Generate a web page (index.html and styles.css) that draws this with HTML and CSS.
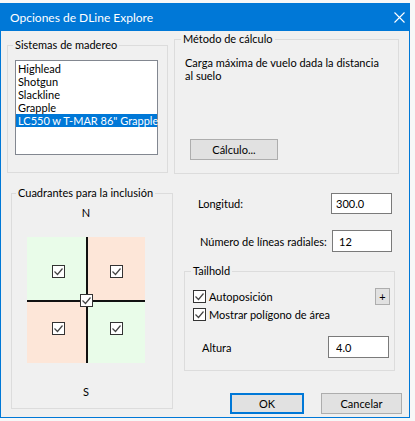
FILE: index.html
```html
<!DOCTYPE html>
<html lang="es">
<head>
    <meta charset="UTF-8">
    <title>Opciones de DLine Explore</title>
    <link rel="stylesheet" href="styles.css">
</head>
<body>
    <div class="window">
        <div class="titlebar">
            <span class="title">Opciones de DLine Explore</span>
            <svg class="close" width="11" height="11" viewBox="0 0 11 11">
                <path d="M0.5 0.5L10.5 10.5M10.5 0.5L0.5 10.5" stroke="#fff" stroke-width="1.1" fill="none"/>
            </svg>
        </div>

        <div class="client">
            <div class="col-left">
                <fieldset class="group systems">
                    <legend>Sistemas de madereo</legend>
                    <ul class="listbox">
                        <li>Highlead</li>
                        <li>Shotgun</li>
                        <li>Slackline</li>
                        <li>Grapple</li>
                        <li class="selected">LC550 w T-MAR 86" Grapple</li>
                    </ul>
                </fieldset>

                <fieldset class="group quadrants">
                    <legend>Cuadrantes para la inclusión</legend>
                    <div class="compass">N</div>
                    <div class="quad-grid">
                        <div class="quad green top left"><svg class="chk" width="13" height="13" viewBox="0 0 13 13"><rect x="0.5" y="0.5" width="12" height="12" fill="#fff" stroke="#333"/><path d="M2.5 6.5L5.5 9.5L10.5 3.5" fill="none" stroke="#444" stroke-width="1.2"/></svg></div>
                        <div class="line"></div>
                        <div class="quad peach top right"><svg class="chk" width="13" height="13" viewBox="0 0 13 13"><rect x="0.5" y="0.5" width="12" height="12" fill="#fff" stroke="#333"/><path d="M2.5 6.5L5.5 9.5L10.5 3.5" fill="none" stroke="#444" stroke-width="1.2"/></svg></div>
                        <div class="line"></div>
                        <div class="line"></div>
                        <div class="line"></div>
                        <div class="quad peach bottom left"><svg class="chk" width="13" height="13" viewBox="0 0 13 13"><rect x="0.5" y="0.5" width="12" height="12" fill="#fff" stroke="#333"/><path d="M2.5 6.5L5.5 9.5L10.5 3.5" fill="none" stroke="#444" stroke-width="1.2"/></svg></div>
                        <div class="line"></div>
                        <div class="quad green bottom right"><svg class="chk" width="13" height="13" viewBox="0 0 13 13"><rect x="0.5" y="0.5" width="12" height="12" fill="#fff" stroke="#333"/><path d="M2.5 6.5L5.5 9.5L10.5 3.5" fill="none" stroke="#444" stroke-width="1.2"/></svg></div>
                        <svg class="chk center-chk" width="13" height="13" viewBox="0 0 13 13"><rect x="0.5" y="0.5" width="12" height="12" fill="#fff" stroke="#333"/><path d="M2.5 6.5L5.5 9.5L10.5 3.5" fill="none" stroke="#444" stroke-width="1.2"/></svg>
                    </div>
                    <div class="compass south">S</div>
                </fieldset>
            </div>

            <div class="col-right">
                <fieldset class="group method">
                    <legend>Método de cálculo</legend>
                    <p class="method-text">Carga máxima de vuelo dada la distancia al suelo</p>
                    <button class="btn calc">Cálculo...</button>
                </fieldset>

                <div class="field-row length">
                    <label>Longitud:</label>
                    <input class="textbox" type="text" value="300.0">
                </div>
                <div class="field-row radials">
                    <label>Número de líneas radiales:</label>
                    <input class="textbox" type="text" value="12">
                </div>

                <fieldset class="group tailhold">
                    <legend>Tailhold</legend>
                    <div class="check-row">
                        <svg class="chk" width="13" height="13" viewBox="0 0 13 13"><rect x="0.5" y="0.5" width="12" height="12" fill="#fff" stroke="#333"/><path d="M2.5 6.5L5.5 9.5L10.5 3.5" fill="none" stroke="#444" stroke-width="1.2"/></svg>
                        <span>Autoposición</span>
                        <button class="btn plus">+</button>
                    </div>
                    <div class="check-row second">
                        <svg class="chk" width="13" height="13" viewBox="0 0 13 13"><rect x="0.5" y="0.5" width="12" height="12" fill="#fff" stroke="#333"/><path d="M2.5 6.5L5.5 9.5L10.5 3.5" fill="none" stroke="#444" stroke-width="1.2"/></svg>
                        <span>Mostrar polígono de área</span>
                    </div>
                    <div class="field-row height">
                        <label>Altura</label>
                        <input class="textbox" type="text" value="4.0">
                    </div>
                </fieldset>

                <div class="dialog-buttons">
                    <button class="btn default ok">OK</button>
                    <button class="btn cancel">Cancelar</button>
                </div>
            </div>
        </div>
    </div>
</body>
</html>
```

FILE: styles.css
```css
body {
    margin: 0;
    background: #f7f7f7;
    font-family: Lato, "Noto Sans", sans-serif;
    font-size: 11px;
    color: #000;
    overflow: hidden;
}

.window {
    width: 408px;
    margin-top: 3px;
    border: 1px solid #0078d7;
    background: #f0f0f0;
}

.titlebar {
    height: 27px;
    background: #0078d7;
    color: #fff;
    display: flex;
    align-items: center;
    justify-content: space-between;
    padding: 0 4px 0 9px;
}

.title {
    font-size: 12px;
}

.client {
    height: 386px;
    box-sizing: border-box;
    padding-top: 1px;
    display: flex;
    align-items: flex-start;
    white-space: nowrap;
}

/* group boxes */
.group {
    margin: 0;
    padding: 0;
    min-width: 0;
    box-sizing: border-box;
    border: 1px solid #dcdcdc;
}

.group legend {
    padding: 0 2px;
    line-height: 14px;
}

.col-left {
    margin-left: 6px;
    width: 166px;
    display: flex;
    flex-direction: column;
    align-items: flex-start;
}

.col-right {
    margin-left: 1px;
    width: 228px;
}

.systems {
    margin-top: 6px;
    width: 161px;
    height: 135px;
}

.systems legend {
    margin-left: 5px;
}

.listbox {
    list-style: none;
    margin: 8px 0 0 7px;
    padding: 1px 0 0;
    width: 143px;
    height: 95px;
    box-sizing: border-box;
    border: 1px solid #828790;
    background: #fff;
}

.listbox li {
    line-height: 13px;
    padding-left: 2px;
}

.listbox li.selected {
    background: #0078d7;
    color: #fff;
}

.quadrants {
    margin: 13px 0 0 4px;
    width: 162px;
    height: 223px;
    padding-left: 15px;
}

.quadrants legend {
    margin-left: -11px;
}

.compass {
    width: 118px;
    text-align: center;
    line-height: 15px;
    margin-top: 5px;
}

.compass.south {
    margin-top: 21px;
}

.quad-grid {
    position: relative;
    margin-top: 17px;
    width: 118px;
    display: grid;
    grid-template-columns: 59px 2px 57px;
    grid-template-rows: 63px 2px 61px;
}

.quad {
    display: flex;
    justify-content: center;
    align-items: center;
    box-sizing: border-box;
}

.quad.green {
    background: #e9fce9;
}

.quad.peach {
    background: #fde6d8;
}

.quad.top {
    padding-top: 6px;
}

.quad.bottom {
    padding-bottom: 8px;
}

.quad.left {
    padding-left: 4px;
}

.quad-grid .line {
    background: #111;
}

.chk {
    display: block;
    flex: none;
}

.center-chk {
    position: absolute;
    left: 53px;
    top: 57px;
}

/* right column */
.method {
    width: 225px;
    height: 142px;
}

.method legend {
    margin-left: 6px;
}

.method-text {
    margin: 10px 0 0 10px;
    width: 196px;
    line-height: 13px;
    white-space: normal;
}

.btn {
    font: inherit;
    color: #000;
    background: #e1e1e1;
    border: 1px solid #adadad;
    padding: 0;
    box-sizing: border-box;
}

.calc {
    display: block;
    margin: 57px 0 0 15px;
    width: 88px;
    height: 21px;
}

.field-row {
    display: flex;
    align-items: center;
    box-sizing: border-box;
}

.textbox {
    margin-left: auto;
    font: inherit;
    width: 61px;
    height: 21px;
    box-sizing: border-box;
    border: 1px solid #7a7a7a;
    background: #fff;
    padding: 0 4px;
}

.length {
    margin-top: 19px;
    padding-left: 24px;
    width: 218px;
}

.radials {
    margin-top: 16px;
    padding-left: 26px;
    width: 218px;
}

.radials .textbox {
    width: 60px;
    height: 22px;
    padding-left: 6px;
}

.tailhold {
    margin: 12px 0 0 10px;
    width: 211px;
    height: 107px;
}

.tailhold legend {
    margin-left: 6px;
}

.check-row {
    display: flex;
    align-items: center;
    height: 17px;
    padding-left: 8px;
}

.check-row:first-of-type {
    margin-top: 10px;
}

.check-row.second {
    margin-top: 1px;
}

.check-row span {
    margin-left: 3px;
}

.plus {
    margin: 0 4px 0 auto;
    width: 15px;
    height: 17px;
    line-height: 14px;
}

.height {
    margin-top: 13px;
    padding-left: 17px;
}

.height .textbox {
    height: 22px;
    margin-right: 5px;
    padding-left: 7px;
}

.dialog-buttons {
    margin-top: 22px;
    padding-left: 56px;
    display: flex;
    gap: 17px;
}

.ok {
    width: 74px;
    height: 21px;
}

.btn.default {
    border: 2px solid #0078d7;
}

.cancel {
    width: 81px;
    height: 21px;
}
```
